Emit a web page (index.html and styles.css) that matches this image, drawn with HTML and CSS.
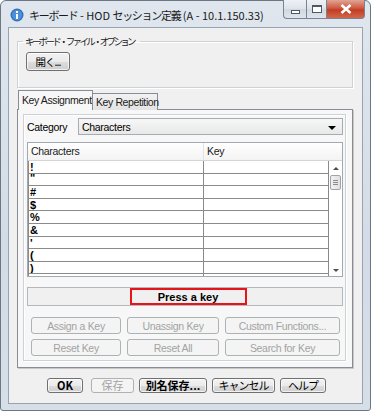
FILE: index.html
```html
<!DOCTYPE html>
<html lang="ja">
<head>
    <meta charset="UTF-8">
    <title>キーボード - HOD セッション定義</title>
    <link rel="stylesheet" href="styles.css">
</head>
<body>
    <div class="window">
        <div class="titlebar">
            <svg class="app-icon" width="14" height="14" viewBox="0 0 14 14">
                <circle cx="7" cy="7" r="6.5" fill="#2f6fb8"/>
                <circle cx="7" cy="7" r="5.2" fill="#4d8fd6"/>
                <rect x="6" y="6" width="2" height="5" fill="#fff"/>
                <rect x="6" y="3" width="2" height="2" fill="#fff"/>
            </svg>
            <span class="title"><span class="kana">キーボード</span> - HOD <span class="kana">セッション定義</span> (A - 10.1.150.33)</span>
            <div class="caption-buttons">
                <div class="cap cap-min"><span class="min-bar"></span></div>
                <div class="cap cap-max"><span class="max-box"></span></div>
                <div class="cap cap-close">
                    <svg width="12" height="10" viewBox="0 0 12 10">
                        <path d="M1.5 1 L10.5 9 M10.5 1 L1.5 9" stroke="#fff" stroke-width="2.6"/>
                    </svg>
                </div>
            </div>
        </div>

        <div class="client">
            <fieldset class="group file-options">
                <legend>キーボード・ファイル・オプション</legend>
                <button class="btn open-btn">開く...</button>
            </fieldset>

            <div class="tabs">
                <div class="tab active">Key Assignment</div>
                <div class="tab">Key Repetition</div>
            </div>
            <div class="tab-panel">
                <div class="inner-group">
                    <div class="category-row">
                        <span class="cat-label">Category</span>
                        <div class="combo">
                            <span>Characters</span>
                            <span class="combo-arrow"></span>
                        </div>
                    </div>

                    <div class="table">
                        <div class="thead">
                            <div class="th col-char">Characters</div>
                            <div class="th col-key">Key</div>
                            <div class="th col-pad"></div>
                        </div>
                        <div class="tbody">
                            <div class="rows">
                                <div class="row"><div class="cell col-char">!</div><div class="cell col-key"></div></div>
                                <div class="row"><div class="cell col-char quote">"</div><div class="cell col-key"></div></div>
                                <div class="row"><div class="cell col-char">#</div><div class="cell col-key"></div></div>
                                <div class="row"><div class="cell col-char">$</div><div class="cell col-key"></div></div>
                                <div class="row"><div class="cell col-char">%</div><div class="cell col-key"></div></div>
                                <div class="row"><div class="cell col-char">&amp;</div><div class="cell col-key"></div></div>
                                <div class="row"><div class="cell col-char">'</div><div class="cell col-key"></div></div>
                                <div class="row"><div class="cell col-char">(</div><div class="cell col-key"></div></div>
                                <div class="row"><div class="cell col-char">)</div><div class="cell col-key"></div></div>
                                <div class="row"><div class="cell col-char">*</div><div class="cell col-key"></div></div>
                            </div>
                            <div class="scrollbar">
                                <span class="arrow up"></span>
                                <span class="thumb"><i></i><i></i><i></i></span>
                                <span class="arrow down"></span>
                            </div>
                        </div>
                    </div>

                    <div class="press-panel">
                        <div class="press-box">Press a key</div>
                    </div>

                    <div class="action-grid">
                        <button class="btn disabled">Assign a Key</button>
                        <button class="btn disabled">Unassign Key</button>
                        <button class="btn disabled">Custom Functions...</button>
                        <button class="btn disabled">Reset Key</button>
                        <button class="btn disabled">Reset All</button>
                        <button class="btn disabled">Search for Key</button>
                    </div>
                </div>
            </div>

            <div class="footer">
                <button class="btn strong w-ok">OK</button>
                <button class="btn disabled w-save">保存</button>
                <button class="btn strong w-saveas">別名保存...</button>
                <button class="btn w-cancel">キャンセル</button>
                <button class="btn w-help">ヘルプ</button>
            </div>
        </div>
    </div>
</body>
</html>
```

FILE: styles.css
```css
* {
    box-sizing: border-box;
}

body {
    margin: 0;
    background: #ffffff;
    font-family: "Liberation Sans", "Noto Sans CJK JP", sans-serif;
    font-size: 12px;
    color: #000;
}

.window {
    width: 371px;
    height: 411px;
    border: 1px solid #6d7784;
    border-radius: 6px 6px 3px 3px;
    background: linear-gradient(#dfe6ee, #d3dce6 60%, #d6dee8);
    padding: 0 7px 6px 7px;
    display: flex;
    flex-direction: column;
}

/* title bar */
.titlebar {
    height: 26px;
    display: flex;
    align-items: center;
}

.app-icon {
    margin: 2px 5px 0 2px;
    flex: none;
}

.title {
    font-family: "Noto Sans CJK JP", sans-serif;
    font-size: 11px;
    color: #1a1a1a;
    margin-top: 1px;
    white-space: nowrap;
}

.title .kana {
    letter-spacing: -1.3px;
}

.caption-buttons {
    margin-left: auto;
    margin-right: -2px;
    align-self: flex-start;
    margin-top: -1px;
    display: flex;
    height: 19px;
    flex: none;
}

.cap {
    height: 19px;
    border: 1px solid #7a838f;
    border-top: none;
    display: flex;
    align-items: center;
    justify-content: center;
    background: linear-gradient(#eef2f6, #dde3ea 50%, #cfd7e0 51%, #dfe5ec);
}

.cap-min {
    width: 23px;
    border-radius: 0 0 0 4px;
    border-right: none;
}

.cap-max {
    width: 21px;
}

.cap-close {
    width: 38px;
    border-left: none;
    border-radius: 0 0 4px 0;
    background: linear-gradient(#e0a494, #cf5a43 45%, #c23c22 55%, #d1684d);
}

.min-bar {
    width: 9px;
    height: 4px;
    border: 1px solid #4e5866;
    background: #fff;
    margin-top: 5px;
}

.max-box {
    width: 10px;
    height: 8px;
    border: 1px solid #4e5866;
    border-top-width: 2px;
    background: #fff;
}

/* client area */
.client {
    flex: 1;
    background: #f0f0f0;
    border: 1px solid #98a3b0;
    display: flex;
    flex-direction: column;
    padding: 0 9px 0 8px;
}

.group {
    border: 1px solid #cdd2d7;
    box-shadow: 1px 1px 0 #fff, inset 1px 1px 0 #fff;
    margin: 6px 0 0 0;
    padding: 4px 0 16px 8px;
    min-width: 0;
}

.group legend {
    font-family: "Noto Sans CJK JP", sans-serif;
    font-size: 9.5px;
    line-height: 14px;
    letter-spacing: -2.7px;
    padding: 0 6px 0 2px;
    margin-left: -3px;
    color: #1a1a1a;
}

.btn {
    font-family: "Liberation Sans", "Noto Sans CJK JP", sans-serif;
    font-size: 10.5px;
    letter-spacing: -0.3px;
    color: #000;
    height: 18px;
    padding: 0;
    border: 1px solid #707070;
    border-radius: 3px;
    background: linear-gradient(#f2f2f2, #ebebeb 50%, #dddddd 51%, #cfcfcf);
    box-shadow: inset 0 0 0 1px rgba(255, 255, 255, 0.7);
    white-space: nowrap;
}

.open-btn {
    width: 44px;
    height: 19px;
    font-family: "Noto Sans CJK JP", sans-serif;
    letter-spacing: -1px;
}

/* tabs */
.tabs {
    display: flex;
    align-items: flex-end;
    height: 20px;
    margin-top: 2px;
    margin-bottom: -1px;
    padding-left: 1px;
    position: relative;
    z-index: 1;
}

.tab {
    height: 17px;
    padding: 0 3px;
    font-size: 10.5px;
    letter-spacing: -0.4px;
    line-height: 16px;
    border: 1px solid #898c95;
    border-bottom: none;
    background: linear-gradient(#f2f2f2, #e3e3e3);
    color: #1a1a1a;
    white-space: nowrap;
    width: 66px;
}

.tab.active {
    height: 20px;
    background: #f7f7f7;
    width: 75px;
    margin-right: -1px;
    line-height: 18px;
}

.tab-panel {
    width: 336px;
    height: 259px;
    border: 1px solid #898c95;
    box-shadow: 1px 1px 0 #c8c8c8;
    background: #f7f7f7;
    padding: 4px 6px 0 5px;
}

.inner-group {
    border: 1px solid #cdd2d7;
    box-shadow: inset 1px 1px 0 #fff, 1px 1px 0 #fff;
    height: 247px;
    padding: 3px 2px 0 3px;
}

.category-row {
    display: flex;
    align-items: center;
    height: 17px;
}

.cat-label {
    width: 51px;
    font-size: 10.5px;
    letter-spacing: -0.3px;
}

.combo {
    flex: 1;
    height: 17px;
    border: 1px solid #a5acb5;
    background: linear-gradient(#f7f7f7, #e8e8e8);
    display: flex;
    align-items: center;
    justify-content: space-between;
    padding: 0 6px 0 3px;
    font-size: 10.5px;
    letter-spacing: -0.3px;
}

.combo-arrow {
    width: 0;
    height: 0;
    border-left: 4px solid transparent;
    border-right: 4px solid transparent;
    border-top: 4px solid #000;
    margin-top: 2px;
}

/* table */
.table {
    margin-top: 7px;
    border: 1px solid #a3a9b0;
    background: #fff;
    height: 135px;
    overflow: hidden;
    display: flex;
    flex-direction: column;
}

.thead {
    display: flex;
    height: 18px;
    flex: none;
    background: linear-gradient(#ffffff, #f3f3f3);
    border-bottom: 1px solid #d5d5d5;
    font-size: 10.5px;
    letter-spacing: -0.3px;
    color: #1a1a1a;
}

.th {
    padding-left: 3px;
    line-height: 17px;
}

.th.col-char {
    width: 176px;
    border-right: 1px solid #e3e3e3;
}

.th.col-key {
    width: 124px;
}

.th.col-pad {
    flex: 1;
}

.tbody {
    flex: 1;
    display: flex;
    overflow: hidden;
}

.rows {
    width: 301px;
    border-left: 1px solid #8a8a8a;
}

.row {
    display: flex;
    height: 12.6px;
    border-bottom: 1px solid #8a8a8a;
}

.cell {
    font-weight: bold;
    font-size: 11px;
    line-height: 12px;
    padding-left: 1px;
    overflow: hidden;
}

.cell.col-char {
    width: 175px;
    border-right: 1px solid #8a8a8a;
}

.cell.col-key {
    flex: 1;
    border-right: 1px solid #8a8a8a;
}

.cell.quote {
    line-height: 9px;
}

.scrollbar {
    flex: 1;
    background: #fff;
    display: flex;
    flex-direction: column;
    align-items: center;
}

.arrow {
    width: 0;
    height: 0;
    border-left: 3px solid transparent;
    border-right: 3px solid transparent;
}

.arrow.up {
    border-bottom: 3px solid #4d4d4d;
    margin-top: 6px;
}

.arrow.down {
    border-top: 3px solid #4d4d4d;
    margin-top: auto;
    margin-bottom: 4px;
}

.thumb {
    width: 11px;
    height: 15px;
    margin-top: 5px;
    border: 1px solid #9ea4ab;
    border-radius: 2px;
    background: linear-gradient(90deg, #f1f1f1, #e0e0e0);
    display: flex;
    flex-direction: column;
    align-items: center;
    justify-content: center;
    gap: 1px;
}

.thumb i {
    width: 5px;
    height: 1px;
    background: #8c8c8c;
}

/* press a key */
.press-panel {
    margin-top: 10px;
    height: 19px;
    border: 1px solid #b4b8bd;
    background: #f0f0f0;
    display: flex;
    justify-content: center;
}

.press-box {
    width: 117px;
    margin-left: 6px;
    border: 2px solid #e8141a;
    font-weight: bold;
    font-size: 11px;
    text-align: center;
    line-height: 14px;
}

.action-grid {
    display: grid;
    grid-template-columns: 90px 92px 115px;
    column-gap: 6px;
    row-gap: 5px;
    margin: 11px 0 0 4px;
}

.btn.disabled {
    color: #a3a3a3;
    border-color: #adb2b5;
    background: #f4f4f4;
    box-shadow: none;
    height: 17px;
}

/* footer buttons */
.footer {
    display: flex;
    gap: 5px;
    padding-left: 30px;
    margin-top: 10px;
}

.footer .btn {
    height: 15px;
    font-family: "Noto Sans CJK JP", sans-serif;
    font-size: 11px;
    letter-spacing: 0;
    line-height: 13px;
}

.footer .btn.w-cancel,
.footer .btn.w-help {
    letter-spacing: -1px;
}

.btn.strong {
    font-weight: bold;
}

.w-ok {
    width: 36px;
    margin-right: 3px;
}

.w-save {
    width: 43px;
}

.w-saveas {
    width: 68px;
}

.w-cancel {
    width: 63px;
}

.w-help {
    width: 46px;
}
```
